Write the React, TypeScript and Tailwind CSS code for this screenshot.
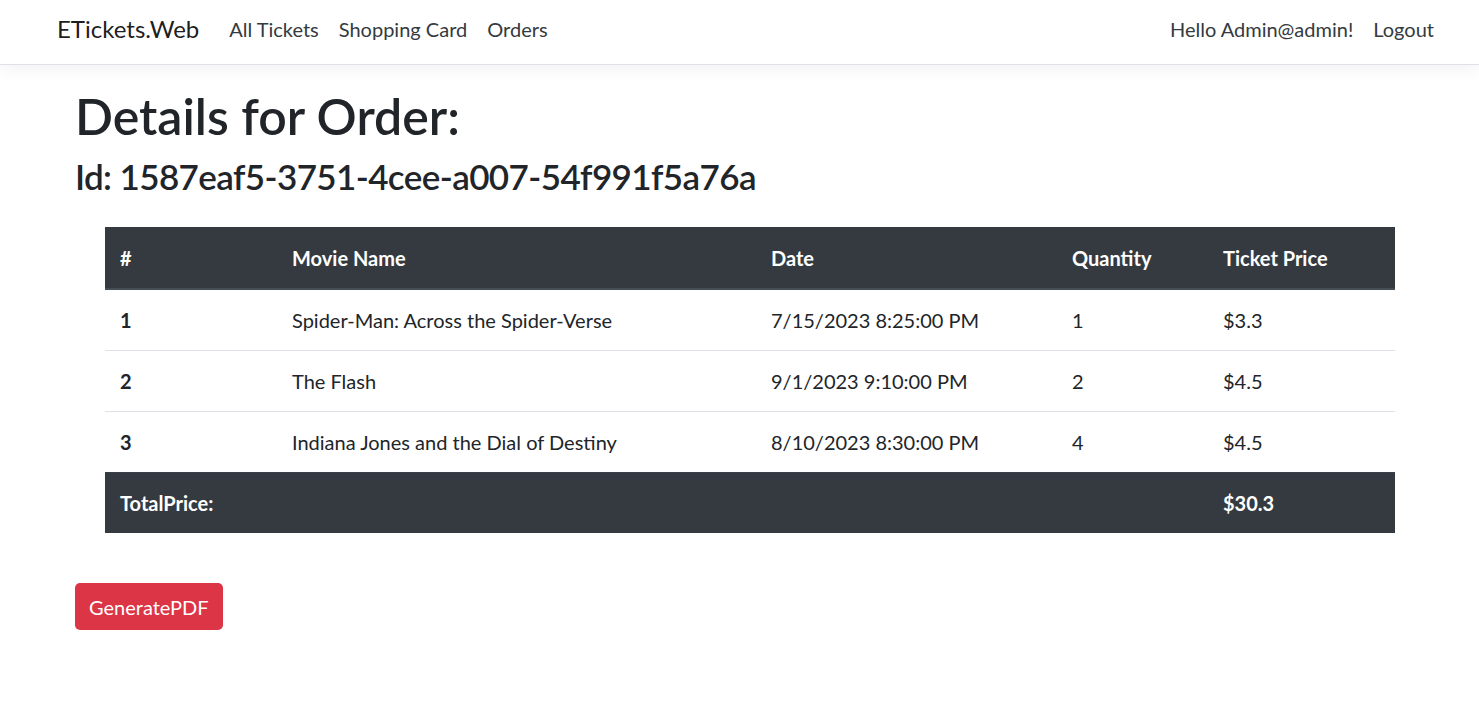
import React from "react";

const rows = [
  { id: 1, movie: "Spider-Man: Across the Spider-Verse", date: "7/15/2023 8:25:00 PM", qty: 1, price: "$3.3" },
  { id: 2, movie: "The Flash", date: "9/1/2023 9:10:00 PM", qty: 2, price: "$4.5" },
  { id: 3, movie: "Indiana Jones and the Dial of Destiny", date: "8/10/2023 8:30:00 PM", qty: 4, price: "$4.5" },
];

export default function App() {
  return (
    <div className="min-h-screen bg-white text-[#212529] text-[20px] leading-[1.5]" style={{ fontFamily: "Lato, 'Noto Sans', sans-serif" }}>
      <nav className="h-[65px] flex items-center justify-between pl-[57px] pr-[35px] pb-[6px] bg-white border-b border-[#dee2e6] shadow-[0_5px_15px_rgba(0,0,0,0.05)]">
        <div className="flex items-center">
          <span className="text-[24px] text-black/90 mr-[20px]">ETickets.Web</span>
          <a className="px-[10px] text-[#343a40]">All Tickets</a>
          <a className="px-[10px] text-[#343a40]">Shopping Card</a>
          <a className="px-[10px] text-[#343a40]">Orders</a>
        </div>
        <div className="flex items-center">
          <span className="px-[10px] text-[#343a40]">Hello Admin@admin!</span>
          <a className="px-[10px] text-[#343a40]">Logout</a>
        </div>
      </nav>

      <main className="pl-[75px] pt-[21px]">
        <h1 className="text-[50px] leading-[1.2] font-semibold">Details for Order:</h1>
        <h3 className="text-[35px] leading-[1.2] font-semibold tracking-[-0.6px] mt-[9px]">Id: 1587eaf5-3751-4cee-a007-54f991f5a76a</h3>

        <table className="table-fixed w-[1290px] ml-[30px] mt-[30px] border-collapse">
          <colgroup>
            <col className="w-[172px]" />
            <col className="w-[479px]" />
            <col className="w-[301px]" />
            <col className="w-[151px]" />
            <col className="w-[187px]" />
          </colgroup>
          <thead>
            <tr className="bg-[#343a40] text-white">
              <th className="text-left font-bold px-[15px] pt-[16px] pb-[15px] border-b-2 border-[#454d55]">#</th>
              <th className="text-left font-bold px-[15px] pt-[16px] pb-[15px] border-b-2 border-[#454d55]">Movie Name</th>
              <th className="text-left font-bold px-[15px] pt-[16px] pb-[15px] border-b-2 border-[#454d55]">Date</th>
              <th className="text-left font-bold px-[15px] pt-[16px] pb-[15px] border-b-2 border-[#454d55]">Quantity</th>
              <th className="text-left font-bold px-[15px] pt-[16px] pb-[15px] border-b-2 border-[#454d55]">Ticket Price</th>
            </tr>
          </thead>
          <tbody>
            {rows.map((r) => (
              <tr key={r.id} className="border-t border-[#dee2e6]">
                <td className="px-[15px] py-[15px] font-bold">{r.id}</td>
                <td className="px-[15px] py-[15px]">{r.movie}</td>
                <td className="px-[15px] py-[15px]">{r.date}</td>
                <td className="px-[15px] py-[15px]">{r.qty}</td>
                <td className="px-[15px] py-[15px]">{r.price}</td>
              </tr>
            ))}
          </tbody>
          <tfoot>
            <tr className="bg-[#343a40] text-white font-bold border-t border-[#3a4047]">
              <td className="px-[15px] py-[15px]">TotalPrice:</td>
              <td className="px-[15px] py-[15px]" />
              <td className="px-[15px] py-[15px]" />
              <td className="px-[15px] py-[15px]" />
              <td className="px-[15px] py-[15px]">$30.3</td>
            </tr>
          </tfoot>
        </table>

        <button className="mt-[50px] h-[47px] px-[14px] bg-[#dc3545] text-white rounded-[5px] text-[20px]">GeneratePDF</button>
      </main>
    </div>
  );
}
